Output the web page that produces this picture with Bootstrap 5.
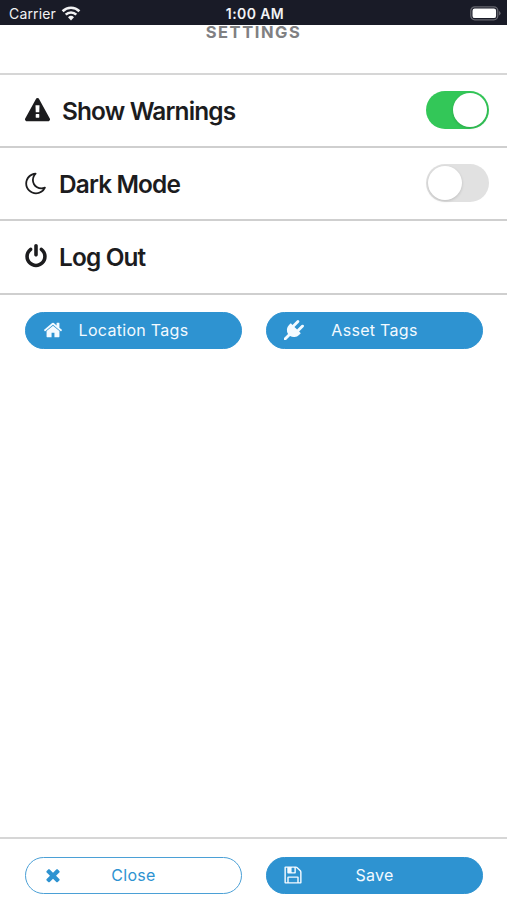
<!DOCTYPE html>
<html lang="en">
<head>
<meta charset="utf-8">
<meta name="viewport" content="width=device-width, initial-scale=1">
<title>Settings</title>
<link href="https://cdn.jsdelivr.net/npm/bootstrap@5.3.0/dist/css/bootstrap.min.css" rel="stylesheet">
<style>
body { font-family: Inter, "Liberation Sans", sans-serif; color: #1c1c1e; }
svg { display: block; fill: currentColor; flex: none; }
.status-bar { height: 25px; background: #191b27; color: #f2f2f4; font-size: 14px; padding: 2px 6px 0 9px; }
.status-side { flex: 1 1 0; }
.carrier-name { letter-spacing: .15px; margin-right: 1px; }
.clock { font-weight: 600; font-size: 14px; letter-spacing: .4px; }
.page-title { height: 50px; border-bottom: 2px solid #d6d6d6; font-size: 16.500px; font-weight: 700; letter-spacing: 1.55px; line-height: 14px; color: #808082; }
.setting { height: 73.2px; border-bottom: 2px solid #cfcfcf; padding: 0 18px 0 25px; font-size: 24.4px; font-weight: 600; }
.setting-name { letter-spacing: -.85px; padding-top: 1px; }
.switch-track { width: 63px; height: 38px; background: #e1e1e1; padding: 2px; margin-top: -1px; }
.switch-track.is-on { background: #33c758; justify-content: flex-end; }
.switch-knob { width: 34px; height: 34px; background: #fff; box-shadow: 0 1px 3px rgba(0,0,0,.16); }
.pill-grid { display: grid; grid-template-columns: 217px 217px; column-gap: 24px; padding-left: 25px; }
.tag-pills { margin-top: 17px; }
.pill { --bs-btn-color: #f3faff; --bs-btn-bg: #2e93d1; --bs-btn-border-color: #2e93d1; display: grid; grid-template-columns: 36px 1fr 36px; align-items: center; height: 37px; padding: 0; font-size: 16px; letter-spacing: .3px; line-height: 20px; }
.pill-outline { --bs-btn-color: #2e93d1; --bs-btn-bg: #fff; --bs-btn-border-color: #4ba0d6; }
.pill svg { margin-left: 17px; }
.pill .save-icon { margin-left: 16px; }
.footer-bar { border-top: 2px solid #d6d6d6; height: 63px; padding-top: 18px; }
.footer-bar .pill { padding-bottom: 2px; }
</style>
</head>
<body class="bg-white vh-100 d-flex flex-column overflow-hidden">
<header class="status-bar d-flex align-items-center">
  <div class="status-side d-flex align-items-center gap-1">
    <span class="carrier-name">Carrier</span>
    <svg width="20" height="15" viewBox="0 0 20 15"><g fill="none" stroke="currentColor" stroke-width="2.6"><path d="M1.6 5.2a12 12 0 0 1 16.8 0"/><path d="M4.7 8.6a7.6 7.6 0 0 1 10.600 0"/></g><path d="M10 14.500 7 11.300a4.300 4.300 0 0 1 6 0z"/></svg>
  </div>
  <span class="clock">1:00 AM</span>
  <div class="status-side d-flex justify-content-end">
    <svg width="31" height="15" viewBox="0 0 31 15"><rect x=".8" y=".8" width="27" height="13" rx="4" fill="none" stroke="#66676f" stroke-width="1.300"/><rect x="2.500" y="2.500" width="23.600" height="9.600" rx="2.200" fill="#fff"/><path d="M29 5v4.600q1.600-.8 1.600-2.300T29 5z" fill="#66676f"/></svg>
  </div>
</header>
<h1 class="page-title text-center mb-0">SETTINGS</h1>
<main class="flex-grow-1">
  <div class="setting d-flex align-items-center justify-content-between">
    <div class="d-flex align-items-center gap-2">
      <svg width="25" height="25" viewBox="0 0 1792 1792"><path d="M1024 1375v-190q0-14-9.500-23.500t-22.500-9.500h-192q-13 0-22.500 9.500t-9.500 23.500v190q0 14 9.500 23.500t22.500 9.500h192q13 0 22.500-9.500t9.500-23.500zm-2-374l18-459q0-12-10-19-13-11-24-11h-220q-11 0-24 11-10 7-10 21l17 457q0 10 10 16.500t24 6.500h185q14 0 23.500-6.500t10.500-16.500zm-14-934l768 1408q35 63-2 126-17 29-46.500 46t-63.500 17h-1536q-34 0-63.500-17t-46.500-46q-37-63-2-126l768-1408q17-31 47-49t65-18 65 18 47 49z"/></svg>
      <span class="setting-name ms-1">Show Warnings</span>
    </div>
    <div class="switch-track is-on d-flex rounded-pill"><div class="switch-knob rounded-circle"></div></div>
  </div>
  <div class="setting d-flex align-items-center justify-content-between">
    <div class="d-flex align-items-center gap-2">
      <svg width="22" height="25" viewBox="128 0 1536 1792"><path d="M1390 1303q-54 9-110 9-182 0-337-90t-245-245-90-337q0-192 104-357-201 60-328.500 229t-127.500 384q0 130 51 248.500t136.500 204 204 136.500 248.500 51q144 0 273.500-61.500t220.500-171.500zm203-85q-94 203-283.500 324.500t-413.500 121.500q-156 0-298-61t-245-164-164-245-61-298q0-153 57.500-292.500t156-241.500 235.500-164.500 290-68.500q44-2 61 39 18 41-15 72-86 78-131.500 181.500t-45.500 218.500q0 148 73 273t198 198 273 73q118 0 228-51 41-18 72 13 14 14 17.500 34t-4.500 38z"/></svg>
      <span class="setting-name ms-1">Dark Mode</span>
    </div>
    <div class="switch-track d-flex rounded-pill"><div class="switch-knob rounded-circle"></div></div>
  </div>
  <div class="setting d-flex align-items-center">
    <div class="d-flex align-items-center gap-2">
      <svg width="22" height="25" viewBox="128 0 1536 1792"><path d="M1664 896q0 156-61 298t-164 245-245 164-298 61-298-61-245-164-164-245-61-298q0-182 80.500-343t226.500-270q43-32 95.500-25t83.500 50q32 42 24.500 94.500t-49.500 84.500q-98 74-151.500 181t-53.500 228q0 104 40.500 198.500t109.500 163.500 163.500 109.500 198.500 40.500 198.500-40.500 163.500-109.500 109.500-163.500 40.500-198.500q0-121-53.500-228t-151.500-181q-42-32-49.500-84.500t24.500-94.500q31-43 84-50t95 25q146 109 226.500 270t80.500 343zm-640-768v640q0 52-38 90t-90 38-90-38-38-90v-640q0-52 38-90t90-38 90 38 38 90z"/></svg>
      <span class="setting-name ms-1">Log Out</span>
    </div>
  </div>
  <div class="pill-grid tag-pills">
    <button type="button" class="btn pill rounded-pill">
      <svg width="20" height="20" viewBox="0 0 1792 1792"><path d="M1472 992v480q0 26-19 45t-45 19h-384v-384h-256v384h-384q-26 0-45-19t-19-45v-480q0-1 .5-3t.5-3l575-474 575 474q1 2 1 6zm223-69l-62 74q-8 9-21 11h-3q-13 0-21-7l-692-577-692 577q-12 8-24 7-13-2-21-11l-62-74q-8-10-7-23.500t11-21.500l719-599q32-26 76-26t76 26l244 204v-195q0-14 9-23t23-9h192q14 0 23 9t9 23v408l219 182q10 8 11 21.500t-7 23.500z"/></svg>
      <span>Location Tags</span>
    </button>
    <button type="button" class="btn pill rounded-pill">
      <svg width="20" height="20" viewBox="0 0 1792 1792"><path d="M1755 453q37 38 37 90.500t-37 90.500l-401 400 150 150-160 160q-163 163-389.500 186.500t-411.500-100.500l-362 362h-181v-181l362-362q-124-185-100.500-411.500t186.500-389.500l160-160 150 150 400-401q38-37 91-37t90 37 37 90.500-37 90.500l-400 401 234 234 401-400q38-37 91-37t90 37z"/></svg>
      <span>Asset Tags</span>
    </button>
  </div>
</main>
<footer class="footer-bar">
  <div class="pill-grid">
    <button type="button" class="btn pill pill-outline rounded-pill">
      <svg width="20" height="20" viewBox="0 0 1792 1792"><path d="M1490 1322q0 40-28 68l-136 136q-28 28-68 28t-68-28l-294-294-294 294q-28 28-68 28t-68-28l-136-136q-28-28-28-68t28-68l294-294-294-294q-28-28-28-68t28-68l136-136q28-28 68-28t68 28l294 294 294-294q28-28 68-28t68 28l136 136q28 28 28 68t-28 68l-294 294 294 294q28 28 28 68z"/></svg>
      <span>Close</span>
    </button>
    <button type="button" class="btn pill rounded-pill">
      <svg class="save-icon" width="20" height="20" viewBox="0 0 1792 1792"><path d="M512 1536h768v-384h-768v384zm896 0h128v-896q0-14-10-38.500t-20-34.500l-281-281q-10-10-34-20t-39-10v416q0 40-28 68t-68 28h-576q-40 0-68-28t-28-68v-416h-128v1280h128v-416q0-40 28-68t68-28h832q40 0 68 28t28 68v416zm-384-928v-320q0-13-9.500-22.500t-22.500-9.500h-192q-13 0-22.500 9.500t-9.500 22.500v320q0 13 9.500 22.500t22.500 9.500h192q13 0 22.500-9.500t9.500-22.500zm640 32v928q0 40-28 68t-68 28h-1344q-40 0-68-28t-28-68v-1344q0-40 28-68t68-28h928q40 0 88 20t76 48l280 280q28 28 48 76t20 88z"/></svg>
      <span>Save</span>
    </button>
  </div>
</footer>
<script src="https://cdn.jsdelivr.net/npm/bootstrap@5.3.0/dist/js/bootstrap.bundle.min.js"></script>
</body>
</html>
